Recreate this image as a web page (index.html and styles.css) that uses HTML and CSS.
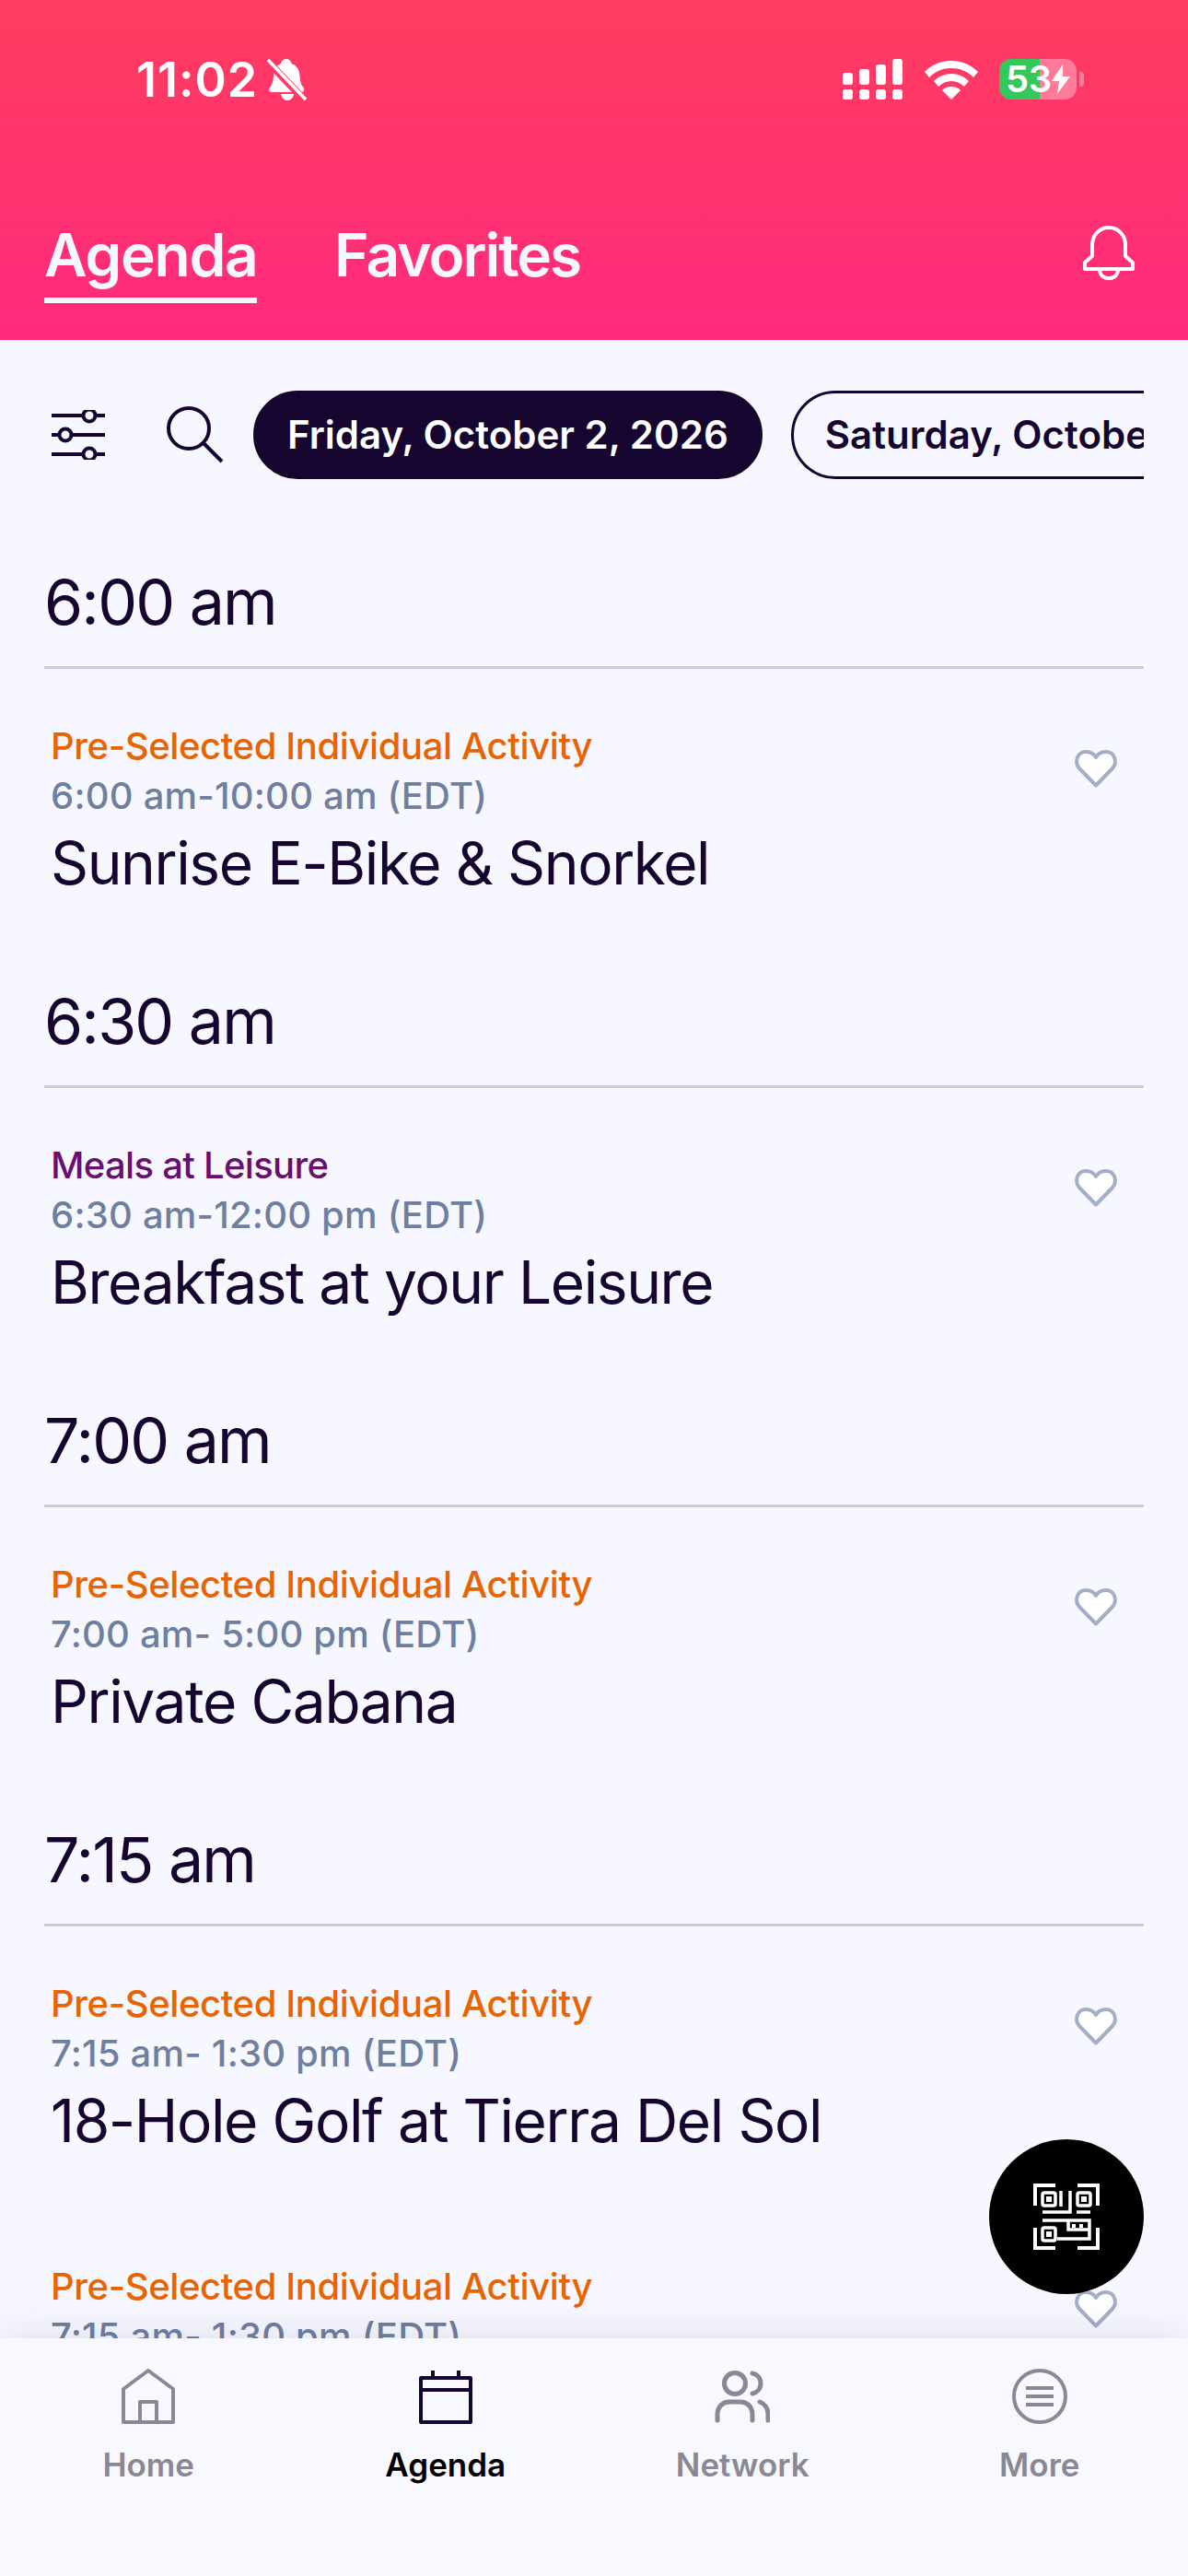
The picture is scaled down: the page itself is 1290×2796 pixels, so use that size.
FILE: index.html
```html
<!DOCTYPE html>
<html lang="en">
<head>
  <meta charset="UTF-8">
  <meta name="viewport" content="width=device-width, initial-scale=1.0">
  <title>Agenda</title>
  <link rel="stylesheet" href="styles.css">
</head>
<body>
  <header class="top">
    <div class="status">
      <div class="status-left">
        <span class="clock">11:02</span>
        <svg class="muted-bell" width="42" height="46" viewBox="0 0 42 46">
          <path fill="#fff" d="M20 0c3 0 5 2 5.500 5 6 2 8.500 7 9 13 .5 7 1.500 10 4 13 1.500 2 .5 5-2 5H4c-2.500 0-3.500-3-2-5 2.500-3 3.500-6 4-13 .5-6 3-11 8-13 .5-3 3-5 6-5z"/>
          <path fill="#fff" d="M14 38h14c-.5 4-3.500 7-7 7s-6.500-3-7-7z"/>
          <path stroke="#ff3a66" stroke-width="8" d="M0 3l40 42"/>
          <path stroke="#fff" stroke-width="3.500" d="M0 1l41 43"/>
        </svg>
      </div>
      <div class="status-right">
        <svg width="66" height="46" viewBox="0 0 66 46" fill="#fff">
          <rect x="0" y="15" width="11" height="13" rx="3"/><rect x="18" y="11" width="11" height="17" rx="3"/>
          <rect x="36" y="6" width="11" height="22" rx="3"/><rect x="54" y="0" width="11" height="28" rx="3"/>
          <rect x="0" y="33" width="11" height="11" rx="3"/><rect x="18" y="33" width="11" height="11" rx="3"/>
          <rect x="36" y="33" width="11" height="11" rx="3"/><rect x="54" y="33" width="11" height="11" rx="3"/>
        </svg>
        <svg width="58" height="42" viewBox="0 0 58 42" fill="#fff">
          <path d="M29 0c11 0 21 4 29 12l-5 6C46 11 38 8 29 8S12 11 5 18l-5-6C8 4 18 0 29 0z"/>
          <path d="M29 14c7 0 14 3 19 8l-5 6c-4-4-9-6-14-6s-10 2-14 6l-5-6c5-5 12-8 19-8z"/>
          <path d="M29 28c4 0 7 1 10 4L29 42 19 32c3-3 6-4 10-4z"/>
        </svg>
        <div class="battery">
          <div class="battery-body">
            <span class="battery-num">53</span>
            <svg width="20" height="32" viewBox="0 0 20 32" fill="#fff"><path d="M12 0L0 18h8L6 32l14-19h-8z"/></svg>
          </div>
          <div class="battery-nub"></div>
        </div>
      </div>
    </div>
    <div class="tabs">
      <a class="tab active">Agenda</a>
      <a class="tab">Favorites</a>
      <svg class="bell" width="56" height="60" viewBox="0 0 56 60" fill="none" stroke="#fff" stroke-width="4">
        <path d="M10 34V22C10 11 18 3 28 3s18 8 18 19v12l8 7v7H2v-7z" stroke-linejoin="round"/>
        <path d="M18 48c0 6 4 10 10 10s10-4 10-10"/>
      </svg>
    </div>
  </header>

  <main class="agenda">
    <div class="toolbar">
      <svg class="tool-icon" width="58" height="54" viewBox="0 0 58 54" fill="none" stroke="#16052e" stroke-width="4">
        <path d="M0 6h34M48 6h10M0 27h8M22 27h36M0 48h34M48 48h10"/>
        <circle cx="41" cy="6" r="6.500"/><circle cx="15" cy="27" r="6.500"/><circle cx="41" cy="48" r="6.500"/>
      </svg>
      <svg class="tool-icon search" width="62" height="62" viewBox="0 0 62 62" fill="none" stroke="#16052e" stroke-width="4">
        <circle cx="24" cy="24" r="22"/><path d="M40 40l20 20"/>
      </svg>
      <div class="dates">
        <div class="pill selected">Friday, October 2, 2026</div>
        <div class="pill">Saturday, October 3, 2026</div>
      </div>
    </div>

    <section class="slot">
      <h2 class="slot-time">6:00 am</h2>
      <article class="event">
        <div>
          <div class="event-type orange">Pre-Selected Individual Activity</div>
          <div class="event-hours">6:00 am-10:00 am (EDT)</div>
          <div class="event-title">Sunrise E-Bike &amp; Snorkel</div>
        </div>
        <svg class="heart" width="46" height="42" viewBox="0 0 46 42"><path d="M23 39.500L5 21C-1 14 3 3 12 3c5 0 9 2.500 11 6 2-3.500 6-6 11-6 9 0 13 11 7 18z"/></svg>
      </article>
    </section>

    <section class="slot">
      <h2 class="slot-time">6:30 am</h2>
      <article class="event">
        <div>
          <div class="event-type purple">Meals at Leisure</div>
          <div class="event-hours">6:30 am-12:00 pm (EDT)</div>
          <div class="event-title">Breakfast at your Leisure</div>
        </div>
        <svg class="heart" width="46" height="42" viewBox="0 0 46 42"><path d="M23 39.500L5 21C-1 14 3 3 12 3c5 0 9 2.500 11 6 2-3.500 6-6 11-6 9 0 13 11 7 18z"/></svg>
      </article>
    </section>

    <section class="slot">
      <h2 class="slot-time">7:00 am</h2>
      <article class="event">
        <div>
          <div class="event-type orange">Pre-Selected Individual Activity</div>
          <div class="event-hours">7:00 am- 5:00 pm (EDT)</div>
          <div class="event-title">Private Cabana</div>
        </div>
        <svg class="heart" width="46" height="42" viewBox="0 0 46 42"><path d="M23 39.500L5 21C-1 14 3 3 12 3c5 0 9 2.500 11 6 2-3.500 6-6 11-6 9 0 13 11 7 18z"/></svg>
      </article>
    </section>

    <section class="slot">
      <h2 class="slot-time">7:15 am</h2>
      <article class="event">
        <div>
          <div class="event-type orange">Pre-Selected Individual Activity</div>
          <div class="event-hours">7:15 am- 1:30 pm (EDT)</div>
          <div class="event-title">18-Hole Golf at Tierra Del Sol</div>
        </div>
        <svg class="heart" width="46" height="42" viewBox="0 0 46 42"><path d="M23 39.500L5 21C-1 14 3 3 12 3c5 0 9 2.500 11 6 2-3.500 6-6 11-6 9 0 13 11 7 18z"/></svg>
      </article>
      <article class="event">
        <div>
          <div class="event-type orange">Pre-Selected Individual Activity</div>
          <div class="event-hours">7:15 am- 1:30 pm (EDT)</div>
        </div>
        <svg class="heart" width="46" height="42" viewBox="0 0 46 42"><path d="M23 39.500L5 21C-1 14 3 3 12 3c5 0 9 2.500 11 6 2-3.500 6-6 11-6 9 0 13 11 7 18z"/></svg>
      </article>
    </section>
  </main>

  <button class="fab">
    <svg width="72" height="72" viewBox="0 0 72 72" fill="none" stroke="#fff" stroke-width="4">
      <path d="M2 24V2h22M48 2h22v22M2 48v22h22M70 48v22H48"/>
      <g stroke-width="3.500">
        <rect x="10" y="10" width="14" height="14" rx="2"/>
        <rect x="48" y="10" width="14" height="14" rx="2"/>
        <rect x="10" y="48" width="14" height="14" rx="2"/>
        <path d="M30 8v17M40 8v23H10M47 31h15M10 40h51v20H26M38 40v10h24"/>
      </g>
      <g fill="#fff" stroke="none">
        <rect x="14" y="14" width="6" height="6"/><rect x="52" y="14" width="6" height="6"/>
        <rect x="14" y="52" width="6" height="6"/><rect x="42" y="44" width="4" height="4"/><rect x="50" y="44" width="4" height="4"/>
      </g>
    </svg>
  </button>

  <nav class="tabbar">
    <a class="nav-item">
      <svg width="60" height="60" viewBox="0 0 60 60" fill="none" stroke="#8a8894" stroke-width="4" stroke-linejoin="round">
        <path d="M3 22L30 2l27 20v36H3z"/><path d="M21 58V36h18v22"/>
      </svg>
      <span>Home</span>
    </a>
    <a class="nav-item current">
      <svg width="60" height="60" viewBox="0 0 60 60" fill="none" stroke="#16052e" stroke-width="4" stroke-linejoin="round">
        <path d="M3 10h54v48H3zM3 23h54"/><path d="M16 2v8M44 2v8"/>
      </svg>
      <span>Agenda</span>
    </a>
    <a class="nav-item">
      <svg width="60" height="60" viewBox="0 0 60 60" fill="none" stroke="#8a8894" stroke-width="5" stroke-linecap="round">
        <circle cx="22" cy="16" r="11.500"/>
        <path d="M41 5c5 1 9 5 9 11s-4 10-9 11M3 56v-6c0-9 6-14 13-14h12c7 0 13 5 13 14v6M49 36c5 2 9 7 9 13v7"/>
      </svg>
      <span>Network</span>
    </a>
    <a class="nav-item">
      <svg width="60" height="60" viewBox="0 0 60 60" fill="none" stroke="#8a8894" stroke-width="4">
        <circle cx="30" cy="30" r="28"/><path d="M15 21h30M15 30h30M15 39h30"/>
      </svg>
      <span>More</span>
    </a>
  </nav>
</body>
</html>
```

FILE: styles.css
```css
* {
  box-sizing: border-box;
}
html, body {
  height: 100%;
}
body {
  position: relative;
  display: flex;
  flex-direction: column;
  margin: 0;
  height: 2796px;
  overflow: hidden;
  font-family: Inter, "Noto Sans", sans-serif;
  background-color: #f7f8ff;
  color: #16052e;
}

/* top pink bar */
.top {
  flex: none;
  height: 369px;
  padding-top: 64px;
  background: linear-gradient(180deg, #ff3d5f 0%, #ff2a7d 100%);
  color: #fff;
}
.status {
  display: flex;
  justify-content: space-between;
  align-items: flex-start;
  height: 46px;
  padding: 0 113px 0 148px;
}
.status-left {
  display: flex;
  align-items: center;
  gap: 11px;
}
.clock {
  font-size: 52px;
  font-weight: 600;
  line-height: 46px;
  letter-spacing: 1px;
}
.muted-bell {
  overflow: visible;
}
.status-right {
  display: flex;
  align-items: flex-start;
  gap: 23px;
}
.status-right > svg:nth-child(2) {
  margin-top: 2px;
}
.battery {
  display: flex;
  align-items: center;
  gap: 3px;
  height: 44px;
}
.battery-body {
  display: flex;
  align-items: center;
  width: 84px;
  height: 44px;
  padding-left: 7px;
  border-radius: 13px;
  background: linear-gradient(90deg, #35c75a 0 44px, #ff7a9b 44px);
}
.battery-num {
  font-size: 40px;
  font-weight: 600;
  line-height: 44px;
  letter-spacing: -0.5px;
}
.battery-nub {
  width: 5px;
  height: 16px;
  border-radius: 0 4px 4px 0;
  background: #ff7a9b;
}
.tabs {
  display: flex;
  align-items: flex-start;
  gap: 84px;
  margin-top: 127px;
  padding: 0 48px;
}
.tab {
  font-size: 64px;
  font-weight: 600;
  line-height: 80px;
  letter-spacing: -2px;
  color: #f7f8ff;
}
.tab.active {
  width: 231px;
  height: 92px;
  border-bottom: 6px solid #f7f8ff;
  letter-spacing: -1.3px;
  white-space: nowrap;
}
.bell {
  margin-left: auto;
  margin-right: 10px;
  margin-top: 7px;
}

/* agenda list */
.agenda {
  flex: 1;
  min-height: 0;
  overflow: hidden;
}
.toolbar {
  display: flex;
  align-items: center;
  height: 96px;
  margin: 55px 48px 58px 56px;
}
.tool-icon {
  flex: none;
}
.search {
  margin-left: 67px;
  margin-right: 32px;
}
.dates {
  display: flex;
  gap: 31px;
  min-width: 0;
  overflow: hidden;
}
.pill {
  flex: none;
  height: 96px;
  padding: 0 34px;
  border: 3px solid #16052e;
  border-radius: 48px;
  font-size: 42px;
  font-weight: 600;
  line-height: 90px;
  color: #16052e;
}
.pill.selected {
  background-color: #16052e;
  color: #fff;
}
.slot {
  padding: 35px 48px 0;
}
.slot-time {
  margin: 0;
  padding-bottom: 30px;
  border-bottom: 3px solid #cdccd2;
  font-size: 68px;
  font-weight: 400;
  line-height: 80px;
  letter-spacing: -1.8px;
}
.event {
  display: flex;
  justify-content: space-between;
  align-items: flex-start;
  height: 307px;
  padding: 57px 29px 0 7px;
}
.event-type {
  font-size: 40px;
  font-weight: 500;
  line-height: 54px;
  letter-spacing: -0.4px;
}
.orange {
  color: #e96400;
}
.purple {
  color: #6b0f6e;
  letter-spacing: -0.7px;
}
.event-hours {
  font-size: 40px;
  font-weight: 500;
  line-height: 53px;
  letter-spacing: 0.2px;
  color: #6f7fa0;
}
.event-title {
  margin-top: 7px;
  font-size: 64px;
  font-weight: 400;
  line-height: 80px;
  letter-spacing: -1.4px;
}
.heart {
  margin-top: 30px;
  overflow: visible;
}
.heart path {
  fill: #fff;
  stroke: #a3afc6;
  stroke-width: 4;
  stroke-linejoin: round;
}

/* qr button */
.fab {
  position: absolute;
  top: 2322px;
  left: 1074px;
  display: flex;
  align-items: center;
  justify-content: center;
  width: 168px;
  height: 168px;
  padding: 0;
  border: none;
  border-radius: 50%;
  background-color: #000;
}

/* bottom nav */
.tabbar {
  position: relative;
  flex: none;
  display: grid;
  grid-template-columns: repeat(4, 1fr);
  height: 258px;
  padding-top: 33px;
  background-color: #f8f8ff;
  box-shadow: 0 -6px 40px rgba(40, 30, 90, 0.1);
}
.nav-item {
  display: flex;
  flex-direction: column;
  align-items: center;
  gap: 22px;
  font-size: 35px;
  font-weight: 600;
  line-height: 44px;
  color: #8a8894;
}
.nav-item.current {
  color: #000;
}
```
